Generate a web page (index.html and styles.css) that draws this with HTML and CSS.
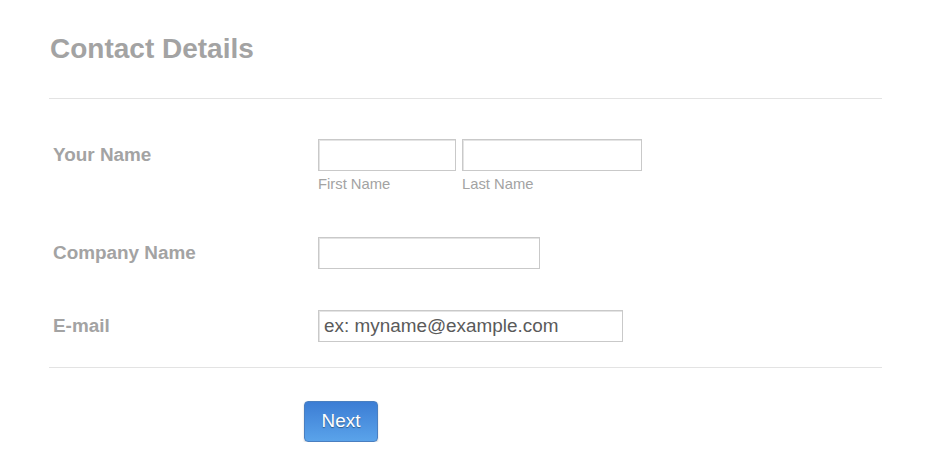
FILE: index.html
```html
<!DOCTYPE html>
<html>
<head>
<meta charset="utf-8">
<link rel="stylesheet" href="styles.css">
</head>
<body>
<form class="form">
  <h1 class="title">Contact Details</h1>
  <div class="divider"></div>
  <div class="fields">
    <div class="row row-name">
      <label class="label">Your Name</label>
      <div class="control name-group">
        <div class="sub">
          <input class="input w-first" type="text">
          <span class="sublabel">First Name</span>
        </div>
        <div class="sub">
          <input class="input w-last" type="text">
          <span class="sublabel">Last Name</span>
        </div>
      </div>
    </div>
    <div class="row row-company">
      <label class="label">Company Name</label>
      <div class="control">
        <input class="input w-company" type="text">
      </div>
    </div>
    <div class="row row-email">
      <label class="label">E-mail</label>
      <div class="control">
        <input class="input w-email" type="text" value="ex: myname@example.com">
      </div>
    </div>
  </div>
  <div class="divider divider-bottom"></div>
  <div class="actions">
    <button type="button" class="btn">Next</button>
  </div>
</form>
</body>
</html>
```
FILE: styles.css
```css
html, body {
  margin: 0;
  padding: 0;
  background: #ffffff;
}
body {
  font-family: "Liberation Sans", Arial, sans-serif;
}
.form {
  width: 833px;
  margin-left: 49px;
  padding-top: 33px;
}
.title {
  margin: 0;
  font-size: 28px;
  line-height: 32px;
  font-weight: bold;
  color: #a3a3a3;
  padding-left: 1px;
}
.divider {
  height: 1px;
  background: #e3e3e3;
  margin-top: 33px;
}
.fields {
  padding-top: 40px;
}
.row {
  display: flex;
  align-items: flex-start;
}
.label {
  width: 265px;
  padding-left: 4px;
  font-size: 18.9px;
  line-height: 32px;
  font-weight: bold;
  color: #a3a3a3;
}
.control {
  display: flex;
}
.name-group {
  gap: 6px;
}
.sub {
  display: flex;
  flex-direction: column;
}
.sublabel {
  margin-top: 4px;
  font-size: 14.8px;
  line-height: 18px;
  color: #a3a3a3;
}
.input {
  box-sizing: border-box;
  height: 32px;
  margin: 0;
  border: 1px solid #c9c9c9;
  box-shadow: inset 1px 1px 0 #e4e4e4;
  border-radius: 0;
  padding: 0 5px;
  font-family: "Liberation Sans", Arial, sans-serif;
  font-size: 18.9px;
  color: #5a5a5a;
  background: #fff;
  outline: none;
}
.w-first { width: 138px; }
.w-last { width: 180px; }
.w-company { width: 222px; }
.w-email { width: 305px; }
.row-company {
  margin-top: 44px;
}
.row-email {
  margin-top: 41px;
}
.divider-bottom {
  margin-top: 25px;
}
.actions {
  padding-top: 33px;
  padding-left: 255px;
}
.btn {
  box-sizing: border-box;
  width: 74px;
  height: 41px;
  border: 1px solid #4a7fc0;
  border-radius: 4px;
  background: linear-gradient(#3c7dd4, #5aa3ea);
  color: #ffffff;
  font-family: "Liberation Sans", Arial, sans-serif;
  font-size: 18.9px;
  line-height: 38px;
  text-shadow: 0 1px 1px rgba(0, 0, 0, 0.4);
  box-shadow: 0 1px 2px rgba(0, 0, 0, 0.2);
  padding: 0 0 1px;
  cursor: pointer;
}
```
